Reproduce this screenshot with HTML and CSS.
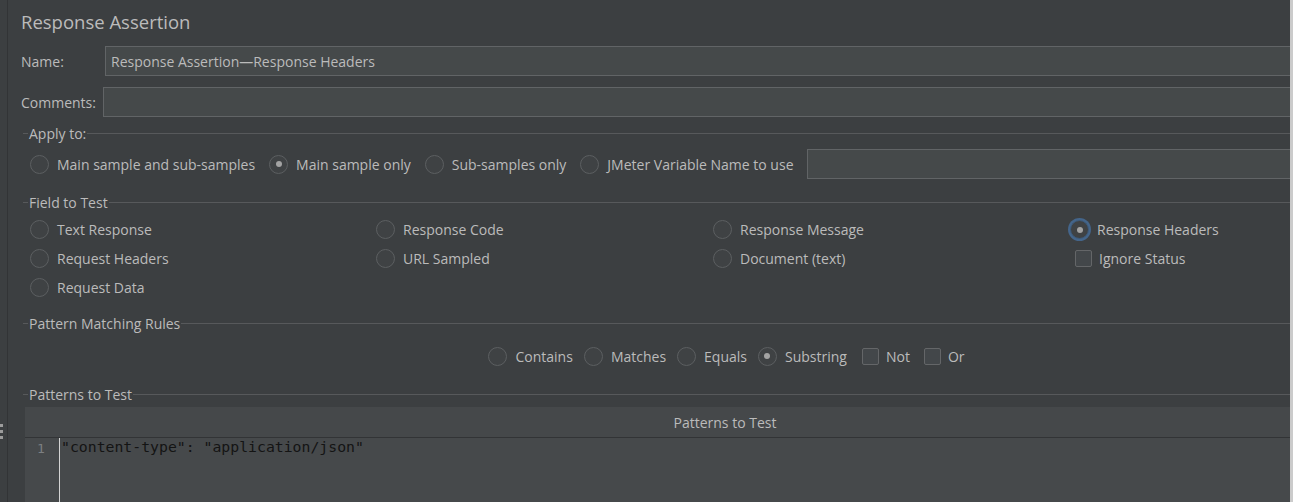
FILE: index.html
```html
<!DOCTYPE html>
<html>
<head>
<meta charset="utf-8">
<link rel="stylesheet" href="styles.css">
</head>
<body>
<div class="app">
  <div class="strip"><div class="grip"><i></i><i></i><i></i></div></div>
  <div class="main">
    <div class="content">
      <div class="title">Response Assertion</div>
      <div class="row name-row"><span class="lbl lbl-name">Name:</span><div class="input">Response Assertion—Response Headers</div></div>
      <div class="row comments-row"><span class="lbl lbl-comments">Comments:</span><div class="input"></div></div>

      <div class="group g-apply">
        <div class="legend"><span>Apply to:</span></div>
        <div class="apply-row">
          <span class="opt"><span class="radio"></span>Main sample and sub-samples</span>
          <span class="opt"><span class="radio on"></span>Main sample only</span>
          <span class="opt"><span class="radio"></span>Sub-samples only</span>
          <span class="opt"><span class="radio"></span>JMeter Variable Name to use</span>
          <div class="input var-input"></div>
        </div>
      </div>

      <div class="group g-field">
        <div class="legend"><span>Field to Test</span></div>
        <div class="field-grid">
          <span class="opt"><span class="radio"></span>Text Response</span>
          <span class="opt"><span class="radio"></span>Response Code</span>
          <span class="opt"><span class="radio"></span>Response Message</span>
          <span class="opt"><span class="radio on focus"></span>Response Headers</span>
          <span class="opt"><span class="radio"></span>Request Headers</span>
          <span class="opt"><span class="radio"></span>URL Sampled</span>
          <span class="opt"><span class="radio"></span>Document (text)</span>
          <span class="opt chk-opt"><span class="check"></span>Ignore Status</span>
          <span class="opt"><span class="radio"></span>Request Data</span>
        </div>
      </div>

      <div class="group g-pattern">
        <div class="legend"><span>Pattern Matching Rules</span></div>
        <div class="pattern-row">
          <span class="opt"><span class="radio"></span>Contains</span>
          <span class="opt"><span class="radio"></span>Matches</span>
          <span class="opt"><span class="radio"></span>Equals</span>
          <span class="opt"><span class="radio on"></span>Substring</span>
          <span class="opt chk-opt gap-l"><span class="check"></span>Not</span>
          <span class="opt chk-opt"><span class="check"></span>Or</span>
        </div>
      </div>

      <div class="group g-tests">
        <div class="legend"><span>Patterns to Test</span></div>
        <div class="table">
          <div class="thead">Patterns to Test</div>
          <div class="editor">
            <div class="gutter"><span class="ln">1</span></div>
            <div class="code">"content-type": "application/json"</div>
          </div>
        </div>
      </div>
    </div>
  </div>
  <div class="edge"></div>
</div>
</body>
</html>
```

FILE: styles.css
```css
* { box-sizing: border-box; }
html, body {
  margin: 0;
  padding: 0;
  background: #3c3f41;
  width: 1293px;
  height: 502px;
  overflow: hidden;
}
body {
  font-family: "Open Sans", "Noto Sans", sans-serif;
  font-size: 14px;
  color: #bbbbbb;
}
.app {
  display: flex;
  height: 502px;
}
.strip {
  width: 8px;
  flex: none;
  border-right: 1px solid #323436;
  display: flex;
  align-items: flex-start;
}
.grip {
  margin-top: 424px;
  display: flex;
  flex-direction: column;
  gap: 3px;
}
.grip i {
  display: block;
  width: 3px;
  height: 3px;
  background: #9c9c9c;
}
.main {
  flex: 1;
  overflow: hidden;
  padding-left: 13px;
}
.content {
  width: 1404px;
}
.title {
  font-size: 18.5px;
  line-height: 24px;
  margin-top: 10px;
  height: 24px;
}
.row {
  display: flex;
  align-items: center;
  height: 30px;
}
.name-row { margin-top: 12px; }
.comments-row { margin-top: 11px; }
.lbl { flex: none; }
.lbl-name { width: 84px; }
.lbl-comments { width: 82px; }
.input {
  flex: 1;
  height: 30px;
  background: #45494a;
  border: 1px solid #616466;
  padding-left: 5px;
  display: flex;
  align-items: center;
  color: #bbbbbb;
}
.group { margin-left: 2px; }
.legend {
  display: flex;
  align-items: center;
  height: 16px;
}
.legend::before {
  content: "";
  width: 5px;
  height: 1px;
  background: #57595b;
  margin-right: 1px;
}
.legend::after {
  content: "";
  flex: 1;
  height: 1px;
  background: #57595b;
  margin-left: 1px;
}
.legend span { line-height: 16px; position: relative; top: 1px; }
.g-apply { margin-top: 8px; }
.g-field { margin-top: 15px; }
.g-pattern { margin-top: 13px; }
.g-tests { margin-top: 15px; }

.opt {
  display: flex;
  align-items: center;
  white-space: nowrap;
  height: 30px;
}
.radio {
  width: 19px;
  height: 19px;
  border-radius: 50%;
  border: 1px solid #5c5f61;
  background: #3f4244;
  margin-right: 8px;
  flex: none;
  display: flex;
  align-items: center;
  justify-content: center;
}
.radio.on::after {
  content: "";
  width: 6px;
  height: 6px;
  border-radius: 50%;
  background: #a3a3a3;
}
.radio.focus {
  box-shadow: 0 0 0 2px #44658a;
  border-color: #3d5a7a;
}
.check {
  width: 17px;
  height: 17px;
  border: 1px solid #646668;
  border-radius: 2px;
  background: #43474a;
  margin-right: 7px;
  flex: none;
}
.apply-row {
  display: flex;
  align-items: center;
  gap: 14px;
  margin-top: 8px;
  padding-left: 7px;
  height: 30px;
}
.var-input { margin-left: -1px; }
.field-grid {
  display: grid;
  grid-template-columns: 346px 337px 357px 1fr;
  grid-auto-rows: 29px;
  margin-top: 5px;
  padding-left: 7px;
}
.field-grid .opt { height: 29px; }
.field-grid .chk-opt { padding-left: 5px; }
.pattern-row {
  display: flex;
  justify-content: center;
  align-items: center;
  gap: 11px;
  margin-top: 10px;
  padding-left: 5px;
  height: 30px;
}
.pattern-row .gap-l { margin-left: 4px; }
.pattern-row .chk-opt + .chk-opt { margin-left: 3px; }
.table {
  margin-left: 2px;
  margin-top: 5px;
}
.thead {
  height: 31px;
  background: #45484a;
  border-bottom: 1px solid #323436;
  text-align: center;
  line-height: 32px;
}
.editor {
  display: flex;
  height: 80px;
  background: #46494b;
}
.gutter {
  width: 35px;
  border-right: 1px solid #d4d4d4;
  padding-left: 12px;
  flex: none;
}
.ln {
  font-family: "DejaVu Sans Mono", monospace;
  font-size: 13px;
  color: #7d8082;
  line-height: 17px;
}
.code {
  font-family: "DejaVu Sans Mono", "Liberation Mono", monospace;
  font-size: 14.8px;
  line-height: 17px;
  color: #141414;
  padding-left: 1px;
  white-space: pre;
}
.edge {
  width: 3px;
  flex: none;
  background: #cbcbcb;
}
```
